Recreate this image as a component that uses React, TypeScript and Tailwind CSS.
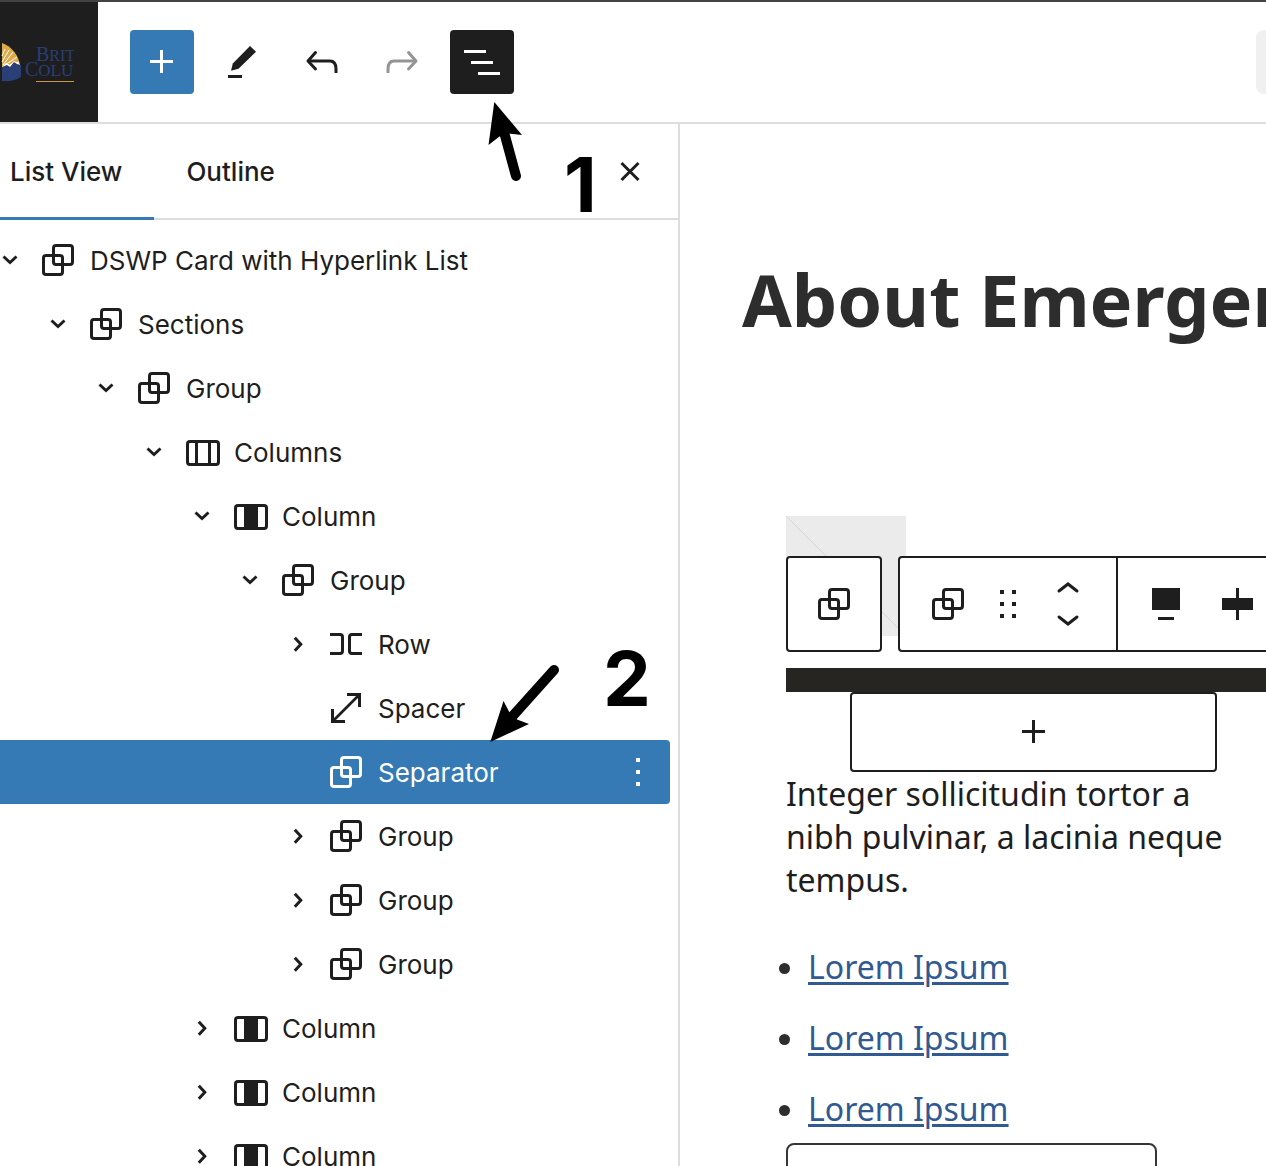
import React from "react";

type IconProps = { children: React.ReactNode; className?: string };

function Icon({ children, className = "" }: IconProps) {
  return (
    <svg viewBox="0 0 48 48" className={`size-12 shrink-0 ${className}`} fill="none" stroke="currentColor" strokeWidth="3" aria-hidden="true">
      {children}
    </svg>
  );
}

const PlusIcon = () => (
  <Icon>
    <path d="M12 23.5h23M23.5 12v23" />
  </Icon>
);

const PenIcon = () => (
  <Icon>
    <path d="M13 32.7 14.8 25.6 32 8l6 5.7-17.5 17Z" fill="currentColor" stroke="none" />
    <path d="M10 38.5h14" />
  </Icon>
);

const UndoIcon = ({ flip = false }: { flip?: boolean }) => (
  <Icon className={flip ? "-scale-x-100" : ""}>
    <path d="M17.5 14.5 10 23l7.5 8" strokeLinecap="round" strokeLinejoin="round" />
    <path d="M10 23h22q6 0 6 8v4" />
  </Icon>
);

const ListViewIcon = () => (
  <Icon>
    <path d="M6 13.5h22M13 24.5h22M20 35.5h22" />
  </Icon>
);

const CloseIcon = () => (
  <Icon>
    <path d="M15.5 16 32.5 33M32.5 16 15.5 33" />
  </Icon>
);

const GroupIcon = () => (
  <Icon>
    <rect x="19.5" y="9.5" width="19" height="19" rx="2.5" />
    <rect x="9.5" y="19.5" width="19" height="19" rx="2.5" />
  </Icon>
);

const ColumnsIcon = () => (
  <Icon>
    <rect x="9.5" y="13.5" width="31" height="23" rx="2.5" />
    <path d="M18.5 13v24M31.5 13v24" />
  </Icon>
);

const ColumnIcon = () => (
  <Icon>
    <rect x="9.5" y="13.5" width="31" height="23" rx="2.5" />
    <path d="M18 13h14v24H18Z" fill="currentColor" stroke="none" />
  </Icon>
);

const RowIcon = () => (
  <Icon>
    <path d="M8 14.5h10q2.500 0 2.500 2.500v14q0 2.500-2.500 2.500H8M40 14.500H30q-2.500 0-2.500 2.500v14q0 2.500 2.500 2.500h10" />
  </Icon>
);

const SpacerIcon = () => (
  <Icon>
    <path d="M25 10.5h12.500V23M10.500 25v12.500H23" />
    <path d="M37 11 11 37" strokeWidth="2.600" />
  </Icon>
);

const ChevronDown = () => (
  <Icon>
    <path d="m17.500 20.500 6.500 6 6.500-6" />
  </Icon>
);

const ChevronRight = () => (
  <Icon>
    <path d="m20.800 17.800 6 6.500-6 6.500" />
  </Icon>
);

const MoreIcon = () => (
  <Icon>
    <path d="M24 10v4M24 22v4M24 34v4" strokeWidth="4" />
  </Icon>
);

const icons = {
  group: GroupIcon,
  columns: ColumnsIcon,
  column: ColumnIcon,
  row: RowIcon,
  spacer: SpacerIcon,
};

type TreeRow = {
  label: string;
  level: number;
  icon: keyof typeof icons;
  state: "open" | "closed" | "leaf";
  selected?: boolean;
};

const rows: TreeRow[] = [
  { label: "DSWP Card with Hyperlink List", level: 0, icon: "group", state: "open" },
  { label: "Sections", level: 1, icon: "group", state: "open" },
  { label: "Group", level: 2, icon: "group", state: "open" },
  { label: "Columns", level: 3, icon: "columns", state: "open" },
  { label: "Column", level: 4, icon: "column", state: "open" },
  { label: "Group", level: 5, icon: "group", state: "open" },
  { label: "Row", level: 6, icon: "row", state: "closed" },
  { label: "Spacer", level: 6, icon: "spacer", state: "leaf" },
  { label: "Separator", level: 6, icon: "group", state: "leaf", selected: true },
  { label: "Group", level: 6, icon: "group", state: "closed" },
  { label: "Group", level: 6, icon: "group", state: "closed" },
  { label: "Group", level: 6, icon: "group", state: "closed" },
  { label: "Column", level: 4, icon: "column", state: "closed" },
  { label: "Column", level: 4, icon: "column", state: "closed" },
  { label: "Column", level: 4, icon: "column", state: "closed" },
];

function Row({ row }: { row: TreeRow }) {
  const BlockIcon = icons[row.icon];
  return (
    <li
      className={`flex h-16 items-center rounded pr-2 ${row.selected ? "bg-[#357ab5] text-white" : ""}`}
      style={{ paddingLeft: row.level * 48 }}
    >
      {row.state === "leaf" ? (
        <span className="w-12 shrink-0" />
      ) : (
        <button type="button" aria-label={row.state === "open" ? "Collapse" : "Expand"} aria-expanded={row.state === "open"}>
          {row.state === "open" ? <ChevronDown /> : <ChevronRight />}
        </button>
      )}
      <a href="#block" className="flex grow items-center gap-2 text-[26px] leading-8">
        <BlockIcon />
        <span className="whitespace-nowrap pt-0.5">{row.label}</span>
      </a>
      {row.selected && (
        <button type="button" aria-label="Options">
          <MoreIcon />
        </button>
      )}
    </li>
  );
}

function Logo() {
  return (
    <a href="#home" aria-label="British Columbia" className="flex h-full w-[98px] shrink-0 items-center bg-[#1e1e1e]">
      <svg viewBox="0 0 98 48" className="h-12 w-full" aria-hidden="true">
        <clipPath id="wordmark">
          <rect x="24" y="0" width="50" height="48" />
        </clipPath>
        <path d="M2 5C11 8 19 17 20 28L2 32Z" fill="#deaa48" />
        <path d="M2 24 9 12M3 27 13 14M5 27 17 19M10 27 19 24M2 18 5 11" stroke="#fff" strokeWidth="1" />
        <path d="M2 29 6 25 10 27 14 23 20 26V29L2 33Z" fill="#fff" />
        <path d="M2 29 7 27 10 29 14 24 17 26 21 27V39Q14 44 2 43Z" fill="#293f75" />
        <g clipPath="url(#wordmark)" fill="#293f75" fontFamily="'Liberation Serif', serif">
          <text x="36" y="23" fontSize="20">
            B<tspan fontSize="16">RIT</tspan>
          </text>
          <text x="25" y="38" fontSize="20">
            C<tspan fontSize="17">OLU</tspan>
          </text>
          <path d="M36 43h38v1H36Z" fill="#c9963f" />
        </g>
      </svg>
    </a>
  );
}

const toolButton = "flex size-16 items-center justify-center rounded";

export default function App() {
  return (
    <div className="relative flex h-screen flex-col overflow-hidden bg-white font-['Inter',sans-serif] text-[#1e1e1e]">
      <header className="flex h-[124px] shrink-0 items-center border-y-2 border-t-[#444244] border-b-[#dddddd]">
        <Logo />
        <div className="flex gap-4 pl-8">
          <button type="button" aria-label="Add block" className={`${toolButton} bg-[#357ab5] text-white`}>
            <PlusIcon />
          </button>
          <button type="button" aria-label="Tools" className={toolButton}>
            <PenIcon />
          </button>
          <button type="button" aria-label="Undo" className={toolButton}>
            <UndoIcon />
          </button>
          <button type="button" aria-label="Redo" className={`${toolButton} text-[#949494]`}>
            <UndoIcon flip />
          </button>
          <button type="button" aria-label="List View" className={`${toolButton} bg-[#1e1e1e] text-white`}>
            <ListViewIcon />
          </button>
        </div>
        <button type="button" aria-label="Document" className="ml-auto h-16 w-2.5 rounded-l-lg bg-[#f0f0f0]" />
      </header>

      <div className="flex min-h-0 grow">
        <aside className="w-[680px] shrink-0 overflow-hidden border-r-2 border-[#dddddd]">
          <div className="flex h-24 border-b-2 border-[#dddddd] text-[26px] font-medium" role="tablist">
            <button type="button" role="tab" aria-selected="true" className="-mb-0.5 border-b-3 border-[#357ab5] pt-0.5 pr-8 pl-2.5">
              List View
            </button>
            <button type="button" role="tab" aria-selected="false" className="px-8">
              Outline
            </button>
            <button type="button" aria-label="Close" className="mr-6 ml-auto">
              <CloseIcon />
            </button>
          </div>
          <ul className="mr-2 -ml-3.5 pt-2">
            {rows.map((row, i) => (
              <Row key={i} row={row} />
            ))}
          </ul>
        </aside>

        <main className="min-w-0 grow overflow-hidden pl-[62px] font-['Noto_Sans',sans-serif]">
          <h1 className="mt-32 text-[72px] leading-[94px] font-bold whitespace-nowrap text-[#2d2d2d]">About Emergency</h1>
          <div className="mt-[170px] pl-11">
            <div className="relative h-[152px]">
              <svg viewBox="0 0 120 120" className="size-[120px] bg-[#ebebeb]" aria-hidden="true">
                <path d="M0 0 120 120" stroke="#d6d6d6" />
              </svg>
              <div className="absolute top-10 left-0 flex gap-4">
                <button
                  type="button"
                  aria-label="Select parent"
                  className="flex size-24 items-center justify-center rounded border-2 border-[#1e1e1e] bg-white"
                >
                  <GroupIcon />
                </button>
                <div className="flex h-24 rounded border-2 border-[#1e1e1e] bg-white" role="toolbar">
                  <div className="flex items-center border-r-2 border-[#1e1e1e]">
                    <button type="button" aria-label="Group" className="px-6">
                      <GroupIcon />
                    </button>
                    <button type="button" aria-label="Drag" className="-mx-3">
                      <Icon>
                        <path d="M18 10v4M18 22v4M18 34v4M30 10v4M30 22v4M30 34v4" strokeWidth="4" />
                      </Icon>
                    </button>
                    <div className="flex w-24 flex-col items-center">
                      <button type="button" aria-label="Move up">
                        <svg viewBox="0 0 48 32" className="h-8 w-12" fill="none" stroke="currentColor" strokeWidth="3" strokeLinecap="round">
                          <path d="m15 19 9-7 9 7" />
                        </svg>
                      </button>
                      <button type="button" aria-label="Move down">
                        <svg viewBox="0 0 48 32" className="h-8 w-12" fill="none" stroke="currentColor" strokeWidth="3" strokeLinecap="round">
                          <path d="m15 13 9 7 9-7" />
                        </svg>
                      </button>
                    </div>
                  </div>
                  <div className="flex items-center">
                    <button type="button" aria-label="Align" className="px-6">
                      <Icon>
                        <path d="M10 8h28v22H10Z" fill="currentColor" stroke="none" />
                        <path d="M16 38.500h16" />
                      </Icon>
                    </button>
                    <button type="button" aria-label="Vertical alignment" className="pr-6">
                      <Icon>
                        <path d="M8 18h31v12H8Z" fill="currentColor" stroke="none" />
                        <path d="M23.500 8v32" />
                      </Icon>
                    </button>
                  </div>
                </div>
              </div>
            </div>
            <hr className="h-6 border-0 bg-[#262522]" />
            <button
              type="button"
              aria-label="Add block"
              className="ml-16 flex h-20 w-[367px] items-center justify-center rounded border-2 border-[#1e1e1e]"
            >
              <PlusIcon />
            </button>
            <p className="w-[450px] text-[32px] leading-[43px] text-[#1e1e1e]">
              Integer sollicitudin tortor a nibh pulvinar, a lacinia neque tempus.
            </p>
            <ul className="mt-11 flex list-disc flex-col gap-7 pl-[22px] text-[32px] leading-[43px] text-[#2d2d2d]">
              {[0, 1, 2].map((i) => (
                <li key={i}>
                  <a href="#lorem" className="text-[#315a92] underline decoration-3 underline-offset-3">
                    Lorem Ipsum
                  </a>
                </li>
              ))}
            </ul>
            <div className="mt-[13px] h-20 w-[371px] rounded-lg border-2 border-[#363636]" />
          </div>
        </main>
      </div>

      <svg viewBox="0 0 40 84" className="pointer-events-none absolute top-[100px] left-[486px] h-[84px] w-10" aria-hidden="true">
        <path d="M8.300 2 36 35 22.500 33.500 13.500 36.500 2.500 45Z" />
        <path d="M18 32 30 76" stroke="#000" strokeWidth="10" strokeLinecap="round" />
      </svg>
      <span className="pointer-events-none absolute top-[136px] left-[564px] text-[76px] leading-24 font-bold text-black">1</span>
      <svg viewBox="0 0 72 80" className="pointer-events-none absolute top-[663px] left-[489px] h-20 w-[72px]" aria-hidden="true">
        <path d="M1.300 79 14.500 38 20.500 49.500 28 56.500 40 61Z" />
        <path d="M22 55 65 7" stroke="#000" strokeWidth="10" strokeLinecap="round" />
      </svg>
      <span className="pointer-events-none absolute top-[630px] left-[603px] text-[76px] leading-24 font-bold text-black">2</span>
    </div>
  );
}
